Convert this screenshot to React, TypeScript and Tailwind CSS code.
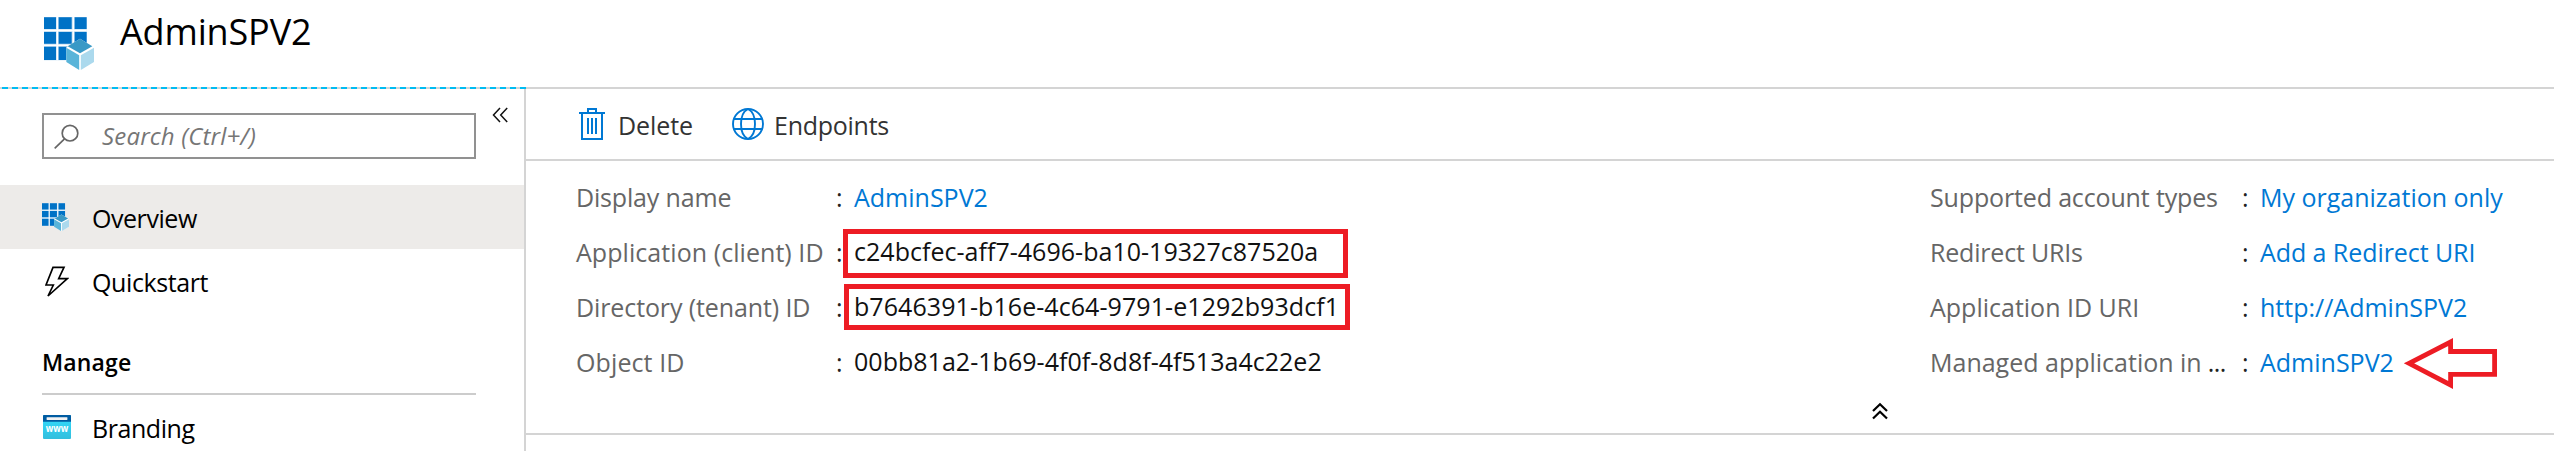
import React from 'react';

function AppIcon({ className }: { className: string }) {
  return (
    <svg className={className} viewBox="42 51 150 158" preserveAspectRatio="none">
      <path fill="#b5d6ee" d="M42 51H170V180H42z" />
      <path fill="#fff" d="M79.5 51h5v129h-5zM127.500 51h5v129h-5zM42 88.500h128v5H42zM42 133h128v5H42z" />
      <path
        fill="#0072c6"
        d="M42 52h36v35H42zM86 52h39v35H86zM134 52h36v35h-36zM42 96h36v35H42zM86 96h39v35H86zM134 96h36v35h-36zM42 140h36v39H42zM86 140h39v39H86z"
      />
      <path fill="#fff" d="M150 116L192 141V185L150 209L109 185V141z" />
      <path fill="#3999c6" d="M150 116L187 138L150 159L113 138z" />
      <path fill="#59b4d9" d="M109 143L147.500 165V209L109 185z" />
      <path fill="#abd9ed" d="M192 143L152.500 165V209L192 185z" />
    </svg>
  );
}

function BoltIcon() {
  return (
    <svg className="ml-[3px] h-[31px] w-6" viewBox="45 226 72 93">
      <path d="M69 230H102L86 264H112L54 316L70 283H48z" fill="none" stroke="#000" strokeWidth="5" />
    </svg>
  );
}

function BrandingIcon() {
  return (
    <svg className="ml-px h-6 w-7" viewBox="0 0 28 24">
      <defs>
        <linearGradient id="site" x1="0" y1="0" x2="0" y2="1">
          <stop offset="0.3" stopColor="#32d4f5" />
          <stop offset="1" stopColor="#32bedd" />
        </linearGradient>
      </defs>
      <rect width="28" height="24" rx="1" fill="url(#site)" />
      <path d="M0 1a1 1 0 0 1 1-1H27a1 1 0 0 1 1 1V6.700H0z" fill="#005ba1" />
      <rect x="3.600" y="2.200" width="20.800" height="2.800" rx="0.400" fill="#f2f2f2" />
      <text x="2.800" y="16.700" textLength="22.500" lengthAdjust="spacingAndGlyphs" className="font-['Open_Sans'] text-[10px] font-bold" fill="#fff">
        www
      </text>
    </svg>
  );
}

function TrashIcon() {
  return (
    <svg className="h-8 w-[26px]" viewBox="0 0 26 32" fill="none" stroke="#0078d4" strokeWidth="2">
      <path d="M0 5H26M9 5V1H17V5M3 5V31H23V5M9 10V26M13 10V26M17 10V26" />
    </svg>
  );
}

function GlobeIcon() {
  return (
    <svg className="h-8 w-8" viewBox="0 0 32 32" fill="none" stroke="#0078d4" strokeWidth="1.900">
      <circle cx="16" cy="16" r="15" />
      <path d="M2 11H30M2 21H30M16 1C11 3.500 9 9 9 16S11 28.500 16 31M16 1C21 3.500 23 9 23 16S21 28.500 16 31" />
    </svg>
  );
}

type Field = {
  label: string;
  value: string;
  labelClass?: string;
  valueClass?: string;
  cut?: boolean;
  mark?: React.ReactNode;
};

const link = 'text-[#0078d4]';
const plain = 'text-[#111]';

const leftFields: Field[] = [
  { label: 'Display name', labelClass: 'tracking-[-0.17px]', value: 'AdminSPV2', valueClass: link },
  {
    label: 'Application (client) ID',
    labelClass: 'tracking-[0.06px]',
    value: 'c24bcfec-aff7-4696-ba10-19327c87520a',
    valueClass: plain + ' tracking-[0.03px] -mt-[2px]',
    mark: <span className="absolute -left-[11px] top-[4px] h-[49px] w-[505px] border-[5px] border-[#ed1c24]" />,
  },
  {
    label: 'Directory (tenant) ID',
    labelClass: 'tracking-[-0.11px]',
    value: 'b7646391-b16e-4c64-9791-e1292b93dcf1',
    valueClass: plain + ' tracking-[0.07px] -mt-[2px]',
    mark: <span className="absolute -left-[10px] top-[4px] h-[46px] w-[506px] border-[5px] border-[#ed1c24]" />,
  },
  {
    label: 'Object ID',
    labelClass: 'tracking-[0.11px]',
    value: '00bb81a2-1b69-4f0f-8d8f-4f513a4c22e2',
    valueClass: plain + ' tracking-[0.03px] -mt-[2px]',
  },
];

const rightFields: Field[] = [
  { label: 'Supported account types', labelClass: 'tracking-[-0.15px]', value: 'My organization only', valueClass: link },
  { label: 'Redirect URIs', labelClass: 'tracking-[-0.2px]', value: 'Add a Redirect URI', valueClass: link + ' tracking-[-0.07px]' },
  { label: 'Application ID URI', value: 'http://AdminSPV2', valueClass: link },
  {
    label: 'Managed application in',
    cut: true,
    value: 'AdminSPV2',
    valueClass: link,
    mark: (
      <svg className="absolute left-[143px] top-0 h-[55px] w-[96px]" viewBox="2404 335 96 55" fill="none" stroke="#ed1c24" strokeWidth="4.800">
        <path d="M2410 363.300L2451.600 342V351.500H2495.600V374.300H2451.600V385z" />
      </svg>
    ),
  },
];

function FieldList({ fields, labelWidth }: { fields: Field[]; labelWidth: string }) {
  return (
    <div className="flex flex-col">
      {fields.map((f) => (
        <div key={f.label} className="flex h-[55px] items-center whitespace-nowrap">
          <div className={`${labelWidth} text-[#666] ${f.labelClass ?? ''}`}>
            {f.label}
            {f.cut && <span className="ml-[6px] tracking-[-0.5px] text-[#222]">...</span>}
          </div>
          <div className="w-[18px] text-[#222]">:</div>
          <div className="relative flex h-[55px] items-center">
            <span className={f.valueClass}>{f.value}</span>
            {f.mark}
          </div>
        </div>
      ))}
    </div>
  );
}

export default function App() {
  return (
    <div className="flex h-[451px] w-[2554px] flex-col overflow-hidden bg-white font-['Open_Sans',sans-serif] text-[25px] text-black">
      <header className="flex h-[87px] shrink-0 items-start pl-[44px] pt-[17px]">
        <AppIcon className="h-[53px] w-[50px]" />
        <h1 className="-mt-[9px] ml-[26px] text-[36px] leading-[48px] tracking-[-0.15px]">AdminSPV2</h1>
      </header>
      <div className="h-[2px] shrink-0 bg-[#d4d4d4]">
        <div className="h-[2px] w-[526px] bg-[repeating-linear-gradient(90deg,#d4d4d4_0px,#d4d4d4_2px,#00bcf2_2px,#00bcf2_8px,#d4d4d4_8px,#d4d4d4_9.960px)]" />
      </div>
      <div className="flex min-h-0 flex-1">
        <aside className="flex w-[524px] shrink-0 flex-col">
          <div className="flex shrink-0 items-start pl-[42px] pt-6">
            <div className="flex h-[46px] w-[434px] items-center border-2 border-[#919191] pl-[10px]">
              <svg className="h-[26px] w-[26px]" viewBox="0 0 26 26" fill="none" stroke="#666" strokeWidth="1.700">
                <circle cx="16" cy="10.200" r="7.800" />
                <path d="M10.500 15.800L0.700 25.300" />
              </svg>
              <span className="ml-[22px] text-[24px] italic tracking-[0.17px] text-[#767676]">Search (Ctrl+/)</span>
            </div>
            <svg className="-mt-[6px] ml-4 h-4 w-4" viewBox="0 0 16 16" fill="none" stroke="#111" strokeWidth="1.500">
              <path d="M8 1L1.500 8L8 15M15.200 1L8.700 8L15.200 15" />
            </svg>
          </div>
          <nav className="mt-[26px] flex flex-col">
            <div className="flex h-16 items-center bg-[#edebe9] pl-[42px]">
              <div className="w-[50px]">
                <AppIcon className="h-[28px] w-[27px]" />
              </div>
              <span className="pt-[4px] tracking-[-0.45px]">Overview</span>
            </div>
            <div className="flex h-16 items-center pl-[42px]">
              <div className="w-[50px]">
                <BoltIcon />
              </div>
              <span className="pt-[4px] tracking-[-0.4px]">Quickstart</span>
            </div>
            <div className="ml-[42px] mr-12 flex h-[82px] items-center border-b-2 border-[#ccc] pt-[19px] text-[23px] font-semibold tracking-[0.15px]">
              Manage
            </div>
            <div className="flex h-16 items-center pl-[42px]">
              <div className="w-[50px]">
                <BrandingIcon />
              </div>
              <span className="pt-[4px] tracking-[-0.45px]">Branding</span>
            </div>
          </nav>
        </aside>
        <main className="flex flex-1 flex-col border-l-2 border-[#d4d4d4]">
          <div className="flex h-[72px] shrink-0 items-center border-b-2 border-[#d4d4d4] pl-[53px] text-[#333]">
            <TrashIcon />
            <span className="ml-[13px] w-[114px] pt-[4px] tracking-[-0.09px]">Delete</span>
            <GlobeIcon />
            <span className="ml-[10px] pt-[4px] tracking-[-0.26px]">Endpoints</span>
          </div>
          <div className="flex h-[274px] shrink-0 flex-col border-b-2 border-[#d4d4d4] pt-[9px]">
            <div className="flex pl-[50px]">
              <div className="w-[1354px]">
                <FieldList fields={leftFields} labelWidth="w-[260px]" />
              </div>
              <FieldList fields={rightFields} labelWidth="w-[312px]" />
            </div>
            <svg className="ml-[1346px] mt-3 h-[18px] w-4" viewBox="0 0 16 18" fill="none" stroke="#000" strokeWidth="2.200">
              <path d="M1 9L8 2.200L15 9M1 16.500L8 9.700L15 16.500" />
            </svg>
          </div>
        </main>
      </div>
    </div>
  );
}
